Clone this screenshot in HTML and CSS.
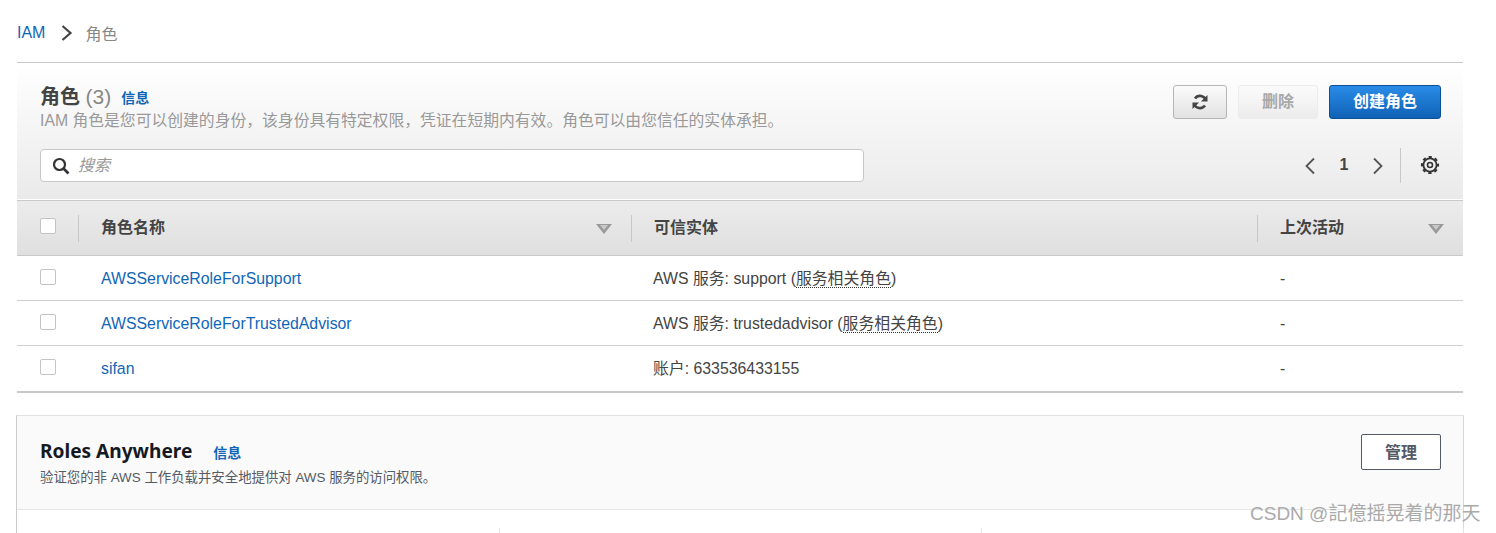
FILE: index.html
```html
<!DOCTYPE html>
<html lang="zh">
<head>
<meta charset="utf-8">
<title>角色</title>
<link rel="stylesheet" href="styles.css">
</head>
<body>
<main class="page">
  <nav class="crumbs">
    <a class="link crumb-link">IAM</a>
    <svg class="crumb-sep" width="14" height="16" viewBox="0 0 14 16"><path d="M2.500 1 10.500 8l-8 7" fill="none" stroke="#444" stroke-width="2.200"/></svg>
    <span class="crumb-now">角色</span>
  </nav>

  <section class="roles">
    <div class="roles-head">
      <div class="head-top">
        <div class="head-text">
          <h1 class="title">角色 <span class="count">(3)</span><a class="link info info-main">信息</a></h1>
          <p class="desc">IAM 角色是您可以创建的身份，该身份具有特定权限，凭证在短期内有效。角色可以由您信任的实体承担。</p>
        </div>
        <div class="actions">
          <button class="btn btn-icon"><svg width="18" height="18" viewBox="0 0 18 18"><path d="M15 7.500A6.200 6.200 0 0 0 4 5.500M3 10.500a6.200 6.200 0 0 0 11 2" fill="none" stroke="#444" stroke-width="2.600"/><path d="M16.500 2v6.500H10zM1.500 16V9.500H8z" fill="#444"/></svg></button>
          <button class="btn btn-off">删除</button>
          <button class="btn btn-primary">创建角色</button>
        </div>
      </div>
      <div class="head-tools">
        <div class="search">
          <svg width="18" height="18" viewBox="0 0 18 18"><circle cx="7.500" cy="7.500" r="5.500" fill="none" stroke="#333" stroke-width="2.200"/><path d="m11.500 11.500 5 5" stroke="#333" stroke-width="2.600"/></svg>
          <span class="search-ph">搜索</span>
        </div>
        <div class="pager">
          <svg width="12" height="18" viewBox="0 0 12 18"><path d="M10 1.500 2.500 9l7.500 7.500" fill="none" stroke="#555" stroke-width="1.800"/></svg>
          <span class="page-no">1</span>
          <svg width="12" height="18" viewBox="0 0 12 18"><path d="M2 1.500 9.500 9 2 16.500" fill="none" stroke="#555" stroke-width="1.800"/></svg>
          <span class="pager-div"></span>
          <svg class="gear" width="20" height="20" viewBox="0 0 20 20"><circle cx="10" cy="10" r="6.600" fill="none" stroke="#333" stroke-width="1.800"/><circle cx="10" cy="10" r="8" fill="none" stroke="#333" stroke-width="2.200" stroke-dasharray="3.200 3.083" stroke-dashoffset="1.600"/><circle cx="10" cy="10" r="2.500" fill="none" stroke="#333" stroke-width="1.600"/></svg>
        </div>
      </div>
    </div>

    <div class="thead">
      <div class="th th-check"><span class="checkbox"></span></div>
      <div class="th th-div"><span class="th-label">角色名称</span><span class="sort"></span></div>
      <div class="th th-div"><span class="th-label">可信实体</span></div>
      <div class="th th-div"><span class="th-label">上次活动</span><span class="sort"></span></div>
    </div>
    <div class="row">
      <div class="td-check"><span class="checkbox"></span></div>
      <div class="td"><a class="link">AWSServiceRoleForSupport</a></div>
      <div class="td td-entity">AWS 服务: support (<span class="dotted">服务相关角色</span>)</div>
      <div class="td">-</div>
    </div>
    <div class="row">
      <div class="td-check"><span class="checkbox"></span></div>
      <div class="td"><a class="link">AWSServiceRoleForTrustedAdvisor</a></div>
      <div class="td td-entity">AWS 服务: trustedadvisor (<span class="dotted">服务相关角色</span>)</div>
      <div class="td">-</div>
    </div>
    <div class="row row-last">
      <div class="td-check"><span class="checkbox"></span></div>
      <div class="td"><a class="link">sifan</a></div>
      <div class="td td-entity">账户: 633536433155</div>
      <div class="td">-</div>
    </div>
  </section>

  <section class="anywhere">
    <div class="any-head">
      <div>
        <h2 class="any-title">Roles Anywhere<a class="link info info-any">信息</a></h2>
        <p class="any-desc">验证您的非 AWS 工作负载并安全地提供对 AWS 服务的访问权限。</p>
      </div>
      <button class="btn-manage">管理</button>
    </div>
    <div class="any-cols"><span></span><span></span><span></span></div>
  </section>
</main>
<div class="watermark">CSDN @記億摇晃着的那天</div>
</body>
</html>
```

FILE: styles.css
```css
* { box-sizing: border-box; }
html, body { margin: 0; height: 533px; overflow: hidden; background: #fff; }
body {
  font-family: "Liberation Sans", "Noto Sans CJK SC", sans-serif;
  font-size: 14.5px;
  color: #444;
}
.page { width: 1446px; margin-left: 17px; }
.link { color: #0f66b8; text-decoration: none; }

.crumbs { height: 62px; display: flex; align-items: center; padding-top: 4px; font-size: 16px; }
.crumb-link { margin-right: 15px; }
.crumb-sep { margin-right: 11px; }
.crumb-now { color: #888; }

.roles { border-top: 1px solid #c9c9c9; }
.roles-head { height: 137px; padding: 0 22px 0 23px; background: linear-gradient(#fff, #eaeaeb); border-bottom: 1px solid #fff; }
.head-top { display: flex; justify-content: space-between; height: 86px; padding-top: 22px; }
.title { margin: 0; font-size: 20px; line-height: 24px; font-weight: 700; color: #444; }
.count { font-weight: 400; color: #888; font-size: 21px; }
.info { font-size: 14px; font-weight: 700; }
.info-main { margin-left: 10px; position: relative; top: -1px; }
.desc { margin: 0; font-size: 15.800px; line-height: 20px; color: #999; }
.actions { display: flex; gap: 11px; }
.btn { height: 34px; border-radius: 3px; font: 700 16px "Liberation Sans", "Noto Sans CJK SC", sans-serif; padding: 0 0 5px; }
.btn-icon { width: 54px; padding: 0; border: 1px solid #b5b5b5; background: linear-gradient(#fbfbfb, #e2e2e2); display: flex; align-items: center; justify-content: center; }
.btn-off { width: 80px; border: 1px solid #ececec; background: linear-gradient(#fbfbfb, #ececec); color: #a8a8a8; }
.btn-primary { width: 112px; border: 1px solid #0b4f94; background: linear-gradient(#2a8ce8, #0f62b5); color: #fff; }

.head-tools { display: flex; justify-content: space-between; align-items: center; height: 33px; }
.search { width: 824px; height: 33px; background: #fff; border: 1px solid #c8c8c8; border-radius: 4px; display: flex; align-items: center; gap: 8px; padding-left: 11px; }
.search-ph { font-style: italic; color: #999; font-size: 16px; padding-bottom: 3px; }
.pager { display: flex; align-items: center; margin-right: 1px; }
.page-no { width: 58px; text-align: center; font-weight: 700; font-size: 16px; color: #444; margin: 0 -1px 2px; }
.pager-div { width: 1px; height: 35px; background: #c8c8c8; margin: 0 19px 0 16px; }
.gear { position: relative; top: -1px; }

.thead, .row { display: grid; grid-template-columns: 61px 553px 626px 206px; align-items: center; }
.thead { height: 56px; border-top: 1px solid #c9c9c9; border-bottom: 1px solid #c9c9c9; background: linear-gradient(#ececec, #dfdfdf); font-size: 16px; font-weight: 700; color: #444; }
.th { height: 27px; display: flex; align-items: center; position: relative; }
.th-label { padding-bottom: 5px; }
.th-check { padding-left: 23px; padding-bottom: 5px; }
.th-div { border-left: 1px solid #c8c8c8; padding-left: 22px; }
.sort { position: absolute; right: 19px; top: 9px; width: 0; height: 0; border-left: 8px solid transparent; border-right: 8px solid transparent; border-top: 10px solid #999; }
.sort::after { content: ""; position: absolute; left: -4px; top: -9px; width: 0; height: 0; border-left: 4px solid transparent; border-right: 4px solid transparent; border-top: 5px solid #c9c9c9; }
.checkbox { display: block; width: 16px; height: 16px; background: #fff; border: 1px solid #c4c4c4; border-radius: 2px; }

.row { height: 45px; border-bottom: 1px solid #cfcfcf; font-size: 15.850px; }
.row-last { height: 47px; border-bottom: 2px solid #c9c9c9; margin-bottom: 1px; }
.td { padding: 2px 0 0 23px; font-size: 15.850px; line-height: 20px; }
.td-entity { padding-left: 22px; }
.td-check { padding: 0 0 2px 23px; }
.row-last .td { padding-top: 0; }
.row-last .td-check { padding-bottom: 4px; }
.dotted { border-bottom: 1px dotted #333; }

.anywhere { margin-top: 22px; margin-left: -1px; margin-right: -1px; border: 1px solid #e2e2e2; border-left-color: #ccc; border-right-color: #d8d8d8; border-bottom: 0; height: 130px; }
.any-head { height: 94px; background: #fafafa; border-bottom: 1px solid #e6e6e6; padding: 18px 22px 0 23px; display: flex; justify-content: space-between; }
.any-title { margin: 0; font: 700 19.100px/34px "Noto Sans", "Noto Sans CJK SC", sans-serif; color: #16191f; }
.info-any { margin-left: 21px; font-family: "Liberation Sans", "Noto Sans CJK SC", sans-serif; font-size: 14px; }
.any-desc { margin: 0; font-size: 13.400px; line-height: 16px; color: #545b64; }
.btn-manage { width: 80px; height: 36px; background: #fff; border: 1px solid #545b64; border-radius: 2px; font: 700 16px "Liberation Sans", "Noto Sans CJK SC", sans-serif; color: #545b64; padding: 0 0 2px; }
.any-cols { display: grid; grid-template-columns: 483px 482px 482px; height: 24px; padding-top: 18px; }
.any-cols span { height: 6px; border-right: 1px solid #e6e6e6; }

.watermark { position: absolute; left: 1250px; top: 502px; font-size: 19px; line-height: 24px; color: #aaa; white-space: nowrap; }
```
